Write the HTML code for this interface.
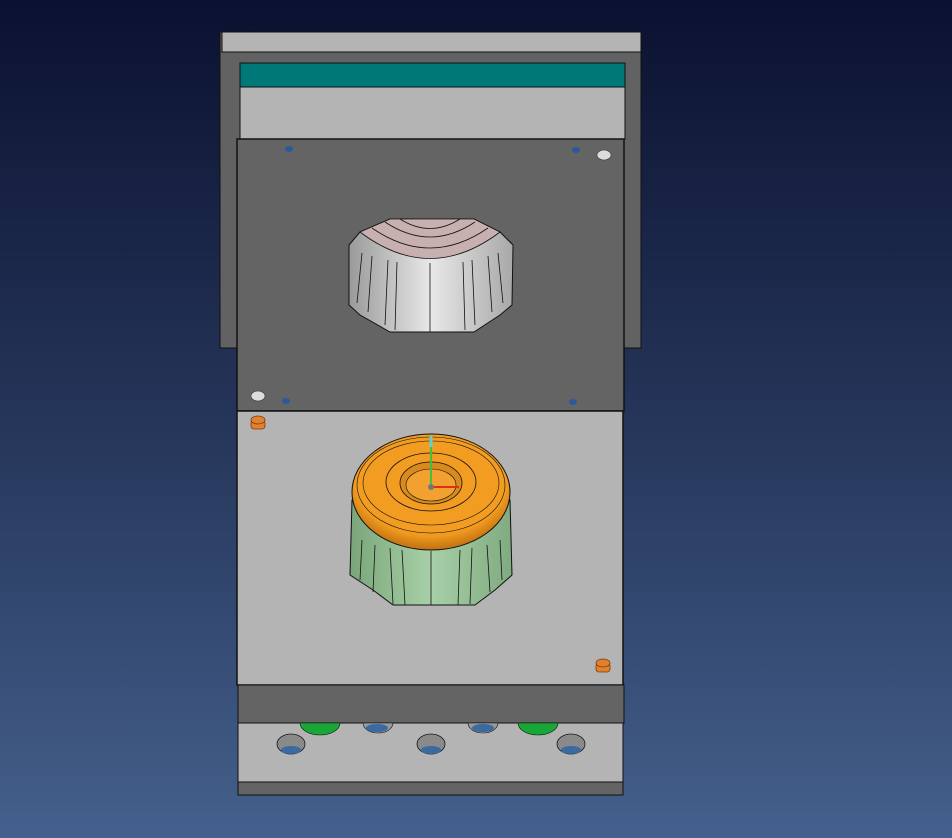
<!DOCTYPE html>
<html><head><style>html,body{margin:0;padding:0;width:952px;height:838px;overflow:hidden}</style></head><body>
<svg width="952" height="838" viewBox="0 0 952 838" xmlns="http://www.w3.org/2000/svg">
<defs>
<linearGradient id="bg" x1="0" y1="0" x2="0" y2="1"><stop offset="0" stop-color="#0b1130"/><stop offset="0.5" stop-color="#253559"/><stop offset="1" stop-color="#44608c"/></linearGradient>
<linearGradient id="cav" x1="0" y1="0" x2="1" y2="0"><stop offset="0" stop-color="#9a9a9a"/><stop offset="0.5" stop-color="#e8e8e8"/><stop offset="1" stop-color="#a8a8a8"/></linearGradient>
<linearGradient id="grn" x1="0" y1="0" x2="1" y2="0"><stop offset="0" stop-color="#7aa57a"/><stop offset="0.5" stop-color="#a8d0a8"/><stop offset="1" stop-color="#80aa80"/></linearGradient>
<radialGradient id="org" cx="0.5" cy="0.4" r="0.6"><stop offset="0" stop-color="#f0a030"/><stop offset="0.8" stop-color="#f09a20"/><stop offset="1" stop-color="#c07010"/></radialGradient>
</defs>
<rect width="952" height="838" fill="url(#bg)"/>
<!-- back plate -->
<rect x="220" y="32" width="421" height="316" fill="#626262" stroke="#111" stroke-width="1"/>
<rect x="222" y="32" width="419" height="20" fill="#b4b4b4" stroke="#111" stroke-width="1"/>
<rect x="240" y="63" width="385" height="24" fill="#007878" stroke="#111" stroke-width="1"/>
<rect x="240" y="87" width="385" height="52" fill="#b4b4b4" stroke="#111" stroke-width="1"/>
<rect x="237" y="139" width="387" height="272" fill="#646464" stroke="#111" stroke-width="1.5"/>
<!-- cavity -->
<path d="M349 245 L360 232 L390 219 L474 219 L500 232 L513 245 L512 305 L500 315 L474 332 L390 332 L360 315 L349 305 Z" fill="url(#cav)" stroke="#111" stroke-width="1"/>
<path d="M360 232 Q430 285 500 232 L474 219 L390 219 Z" fill="#c9b0b0" stroke="#111" stroke-width="0.8"/>
<path d="M372 228 Q430 268 488 228 M385 222 Q430 252 475 222 M400 219 Q430 238 460 219" fill="none" stroke="#111" stroke-width="0.8"/>
<path d="M362 253 L357 303 M372 256 L368 312 M388 260 L385 325 M397 262 L395 330 M430 263 L430 332 M463 262 L465 330 M472 260 L475 325 M488 256 L492 312 M498 253 L503 303" stroke="#111" stroke-width="0.8"/>
<!-- holes -->
<ellipse cx="289" cy="149" rx="4" ry="3" fill="#2a5a9a"/>
<ellipse cx="576" cy="150" rx="4" ry="3" fill="#2a5a9a"/>
<ellipse cx="286" cy="401" rx="4" ry="3" fill="#2a5a9a"/>
<ellipse cx="573" cy="402" rx="4" ry="3" fill="#2a5a9a"/>
<ellipse cx="604" cy="155" rx="7" ry="5" fill="#ddd" stroke="#333" stroke-width="0.6"/>
<ellipse cx="258" cy="396" rx="7" ry="5" fill="#ddd" stroke="#333" stroke-width="0.6"/>
<!-- lower plate -->
<rect x="237" y="411" width="386" height="274" fill="#b4b4b4" stroke="#111" stroke-width="1.5"/>
<rect x="238" y="685" width="386" height="38" fill="#646464" stroke="#111" stroke-width="1"/>
<rect x="238" y="723" width="385" height="60" fill="#b4b4b4" stroke="#111" stroke-width="1"/>
<rect x="238" y="782" width="385" height="13" fill="#646464" stroke="#111" stroke-width="1"/>
<path d="M300 723 a20 12 0 0 0 40 0 Z" fill="#18a838" stroke="#111" stroke-width="0.6"/>
<path d="M518 723 a20 12 0 0 0 40 0 Z" fill="#18a838" stroke="#111" stroke-width="0.6"/>
<path d="M363 723 a15 10 0 0 0 30 0 Z" fill="#999" stroke="#111" stroke-width="0.6"/>
<path d="M468 723 a15 10 0 0 0 30 0 Z" fill="#999" stroke="#111" stroke-width="0.6"/>
<ellipse cx="377" cy="728" rx="11" ry="4" fill="#3a6aa0"/>
<ellipse cx="483" cy="728" rx="11" ry="4" fill="#3a6aa0"/>
<g stroke="#111" stroke-width="0.8">
<ellipse cx="291" cy="744" rx="14" ry="10" fill="#8a8a8a"/>
<ellipse cx="431" cy="744" rx="14" ry="10" fill="#8a8a8a"/>
<ellipse cx="571" cy="744" rx="14" ry="10" fill="#8a8a8a"/>
</g>
<ellipse cx="291" cy="750" rx="10" ry="4" fill="#3a6aa0"/>
<ellipse cx="431" cy="750" rx="10" ry="4" fill="#3a6aa0"/>
<ellipse cx="571" cy="750" rx="10" ry="4" fill="#3a6aa0"/>
<!-- pins -->
<g fill="#e08030" stroke="#7a3a00" stroke-width="0.8">
<rect x="251" y="420" width="14" height="9" rx="3"/><ellipse cx="258" cy="420" rx="7" ry="4"/>
<rect x="596" y="663" width="14" height="9" rx="3"/><ellipse cx="603" cy="663" rx="7" ry="4"/>
</g>
<!-- knob -->
<path d="M352 500 L350 575 L373 590 L393 605 L475 605 L495 590 L512 575 L510 500 Z" fill="url(#grn)" stroke="#111" stroke-width="1"/>
<path d="M362 540 L360 580 M375 545 L373 592 M390 548 L393 604 M402 550 L405 605 M431 551 L431 605 M460 550 L458 605 M472 548 L470 604 M487 545 L490 592 M500 540 L502 580" stroke="#111" stroke-width="0.8"/>
<ellipse cx="431" cy="492" rx="79" ry="58" fill="url(#org)" stroke="#111" stroke-width="1"/>
<ellipse cx="431" cy="485" rx="74" ry="48" fill="#f29c22" stroke="#111" stroke-width="0.6"/>
<ellipse cx="431" cy="483" rx="68" ry="42" fill="none" stroke="#111" stroke-width="0.6"/>
<ellipse cx="431" cy="482" rx="45" ry="29" fill="none" stroke="#111" stroke-width="0.8"/>
<ellipse cx="431" cy="483" rx="31" ry="21" fill="#d88a1c" stroke="#111" stroke-width="0.8"/>
<ellipse cx="431" cy="485" rx="25" ry="16" fill="#f2a030" stroke="#111" stroke-width="0.6"/>
<line x1="431" y1="440" x2="431" y2="487" stroke="#40c040" stroke-width="2"/>
<line x1="431" y1="436" x2="431" y2="447" stroke="#60d0d0" stroke-width="3"/>
<line x1="431" y1="487" x2="459" y2="487" stroke="#e03010" stroke-width="2"/>
<circle cx="431" cy="487" r="3" fill="#777"/>
</svg>
</body></html>
